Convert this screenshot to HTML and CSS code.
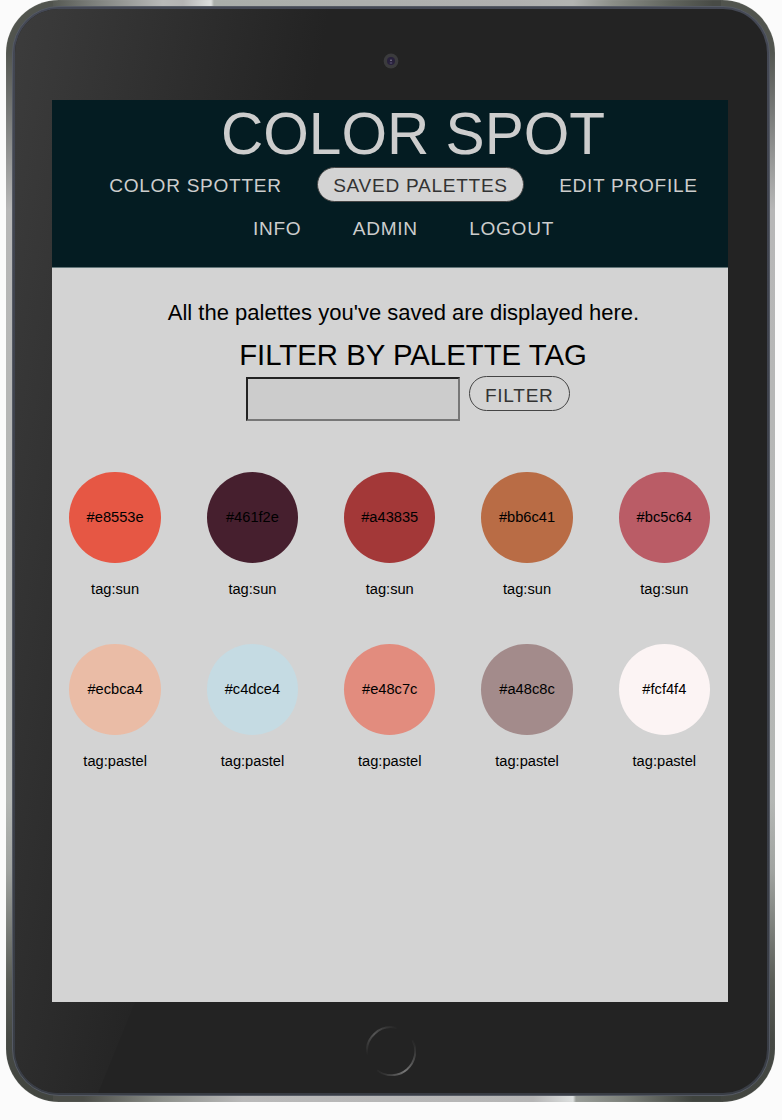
FILE: index.html
```html
<!DOCTYPE html>
<html lang="en">
<head>
<meta charset="utf-8">
<title>Color Spot</title>
<link rel="stylesheet" href="styles.css">
</head>
<body>
<div class="tablet">
  <div class="rim">
    <div class="face">
      <div class="top-bezel">
        <svg class="camera" width="16" height="16" viewBox="0 0 16 16"><circle cx="8" cy="8" r="7.4" fill="#3b3b3d"/><circle cx="8" cy="8" r="4" fill="#28213c"/><circle cx="8" cy="7.3" r=".8" fill="#8c8a9c"/><path d="M6.8 10h2.4" stroke="#6f6889" stroke-width=".8"/></svg>
      </div>
      <main class="screen">
        <header class="header">
          <h1 class="logo">COLOR SPOT</h1>
          <nav class="nav">
            <div class="nav-row"><a class="link">COLOR SPOTTER</a><a class="link active">SAVED PALETTES</a><a class="link">EDIT PROFILE</a></div>
            <div class="nav-row"><a class="link">INFO</a><a class="link">ADMIN</a><a class="link">LOGOUT</a></div>
          </nav>
        </header>
        <p class="intro">All the palettes you've saved are displayed here.</p>
        <h2 class="subtitle">FILTER BY PALETTE TAG</h2>
        <form class="filter"><input class="field" type="text" aria-label="Palette tag"><button class="link button" type="button">FILTER</button></form>
        <section class="palettes">
          <div class="swatch"><div class="dot sun1">#e8553e</div><span>tag:sun</span></div>
          <div class="swatch"><div class="dot sun2">#461f2e</div><span>tag:sun</span></div>
          <div class="swatch"><div class="dot sun3">#a43835</div><span>tag:sun</span></div>
          <div class="swatch"><div class="dot sun4">#bb6c41</div><span>tag:sun</span></div>
          <div class="swatch"><div class="dot sun5">#bc5c64</div><span>tag:sun</span></div>
          <div class="swatch"><div class="dot pastel1">#ecbca4</div><span>tag:pastel</span></div>
          <div class="swatch"><div class="dot pastel2">#c4dce4</div><span>tag:pastel</span></div>
          <div class="swatch"><div class="dot pastel3">#e48c7c</div><span>tag:pastel</span></div>
          <div class="swatch"><div class="dot pastel4">#a48c8c</div><span>tag:pastel</span></div>
          <div class="swatch"><div class="dot pastel5">#fcf4f4</div><span>tag:pastel</span></div>
        </section>
      </main>
      <div class="bottom-bezel">
        <svg class="home" width="50" height="50" viewBox="0 0 50 50" fill="none" stroke-width="2">
          <defs>
            <linearGradient id="upper" x1="0" y1="1" x2="1" y2="0"><stop offset="0" stop-color="#232323"/><stop offset=".5" stop-color="#555"/><stop offset="1" stop-color="#232323"/></linearGradient>
            <linearGradient id="lower" gradientUnits="userSpaceOnUse" x1="10" y1="45" x2="48" y2="14"><stop offset="0" stop-color="#232323"/><stop offset=".45" stop-color="#777"/><stop offset="1" stop-color="#232323"/></linearGradient>
          </defs>
          <path d="M1.2 29A24 24 0 0 1 31 2" stroke="url(#upper)"/>
          <path d="M46.5 14A24 24 0 0 1 11 44.5" stroke="url(#lower)"/>
        </svg>
      </div>
    </div>
  </div>
</div>
</body>
</html>
```
FILE: styles.css
```css
* { box-sizing: border-box; }
body { margin: 0; background: #fbfbfb; font: 14.67px/17px "Liberation Sans", Arial, sans-serif; color: #000; }

/* metal edge */
.tablet {
  width: 769px; height: 1102px; margin-left: 6px; padding: 6px; border-radius: 53px;
  background:
    linear-gradient(90deg, #565953 0, #7c7f7b 40px, #b8b9b8 110px, #b4b4b4 130px, #dcdedd 158px, #aaaeaa 161px, #b0b0b0 460px, #b2b4b2 520px, #8b8e88 560px, #5f635c 620px, #484b46 660px) 47px 0 / 668px 10px no-repeat,
    linear-gradient(90deg, #4b4d48 0, #4b4d48 30px, #8d908b 110px, #b9b9b9 190px, #b5b5b5 480px, #dcdfde 520px, #989c97 523px, #7d817b 570px, #3f433e 640px, #3f433e 668px) 47px 1090px / 668px 12px no-repeat,
    linear-gradient(180deg, #51544e 0, #51544e 50px, #757775 110px, #b7b7b7 210px, #b4b7b4 800px, #a0a3a0 870px, #5a5d57 980px, #454843 1040px, #424540 1102px);
  box-shadow: inset 0 0 1px 0 #c6cac680;
}
.rim { height: 1090px; width: 758px; padding: 2px; border-radius: 47px; background: linear-gradient(#444854, #393d45); border: 1px solid #555a64; }
.face { height: 1084px; width: 752px; border-radius: 44px; background: #232323; position: relative; overflow: hidden; }
.face::before { content: ""; position: absolute; inset: 0; background: linear-gradient(100deg, #3c3c3c 0, #232323 310px); clip-path: polygon(0 0, 524px 0, 83px 100%, 0 100%); }
.top-bezel { position: relative; height: 91px; padding: 44px 0 0 368px; }
.camera, .home { display: block; }
.bottom-bezel { position: relative; padding: 24px 0 0 351px; }

.screen { position: relative; width: 676px; height: 902px; margin-left: 37px; background: #d3d3d3; overflow: hidden; }
.header { height: 168px; background: #041c22; border-bottom: 1px solid #64777a; color: #cdcdcd; }
.logo { margin: 0 0 0 46px; height: 67px; font-size: 58.6px; font-weight: 400; line-height: 67px; text-align: center; }
.nav { display: grid; gap: 8px; padding-left: 27px; }
.nav-row { display: flex; justify-content: center; gap: 18.6px; }
.link { display: block; height: 35px; padding: 1px 15.4px 0; border: 1px solid transparent; border-radius: 18px; font: 19.07px/34px "Liberation Sans", Arial, sans-serif; letter-spacing: .72px; white-space: nowrap; }
.active { background: #d3d3d3; color: #333; border-color: #444; }

.intro { margin: 32px 0 0 27px; font-size: 22px; line-height: 26px; text-align: center; }
.subtitle { margin: 12px 0 0 46px; font-size: 29.33px; font-weight: 400; line-height: 34px; text-align: center; }
.filter { display: flex; align-items: flex-start; gap: 8.6px; margin: 4px 0 0 194px; }
.field { width: 214px; height: 44px; margin-top: 1px; border: 2px solid; border-color: #222 #777 #777 #222; border-radius: 0; background: #ccc; }
.button { padding-top: 2px; background: none; color: #333; border-color: #444; }

.palettes { display: grid; grid-template-columns: repeat(5, 91.5px); column-gap: 45.8px; row-gap: 46px; margin: 50.5px 0 0 17.4px; }
.swatch { display: grid; justify-items: center; gap: 18px; height: 126px; align-content: start; }
.dot { width: 91.5px; height: 91.5px; border-radius: 50%; line-height: 91px; text-align: center; }
.sun1 { background: #e65744; } .sun2 { background: #461f2e; } .sun3 { background: #a33838; }
.sun4 { background: #b96c45; } .sun5 { background: #ba5c66; }
.pastel1 { background: #eabca6; } .pastel2 { background: #c5dbe3; } .pastel3 { background: #e28c7e; }
.pastel4 { background: #a38b8b; } .pastel5 { background: #fcf4f4; }
```
